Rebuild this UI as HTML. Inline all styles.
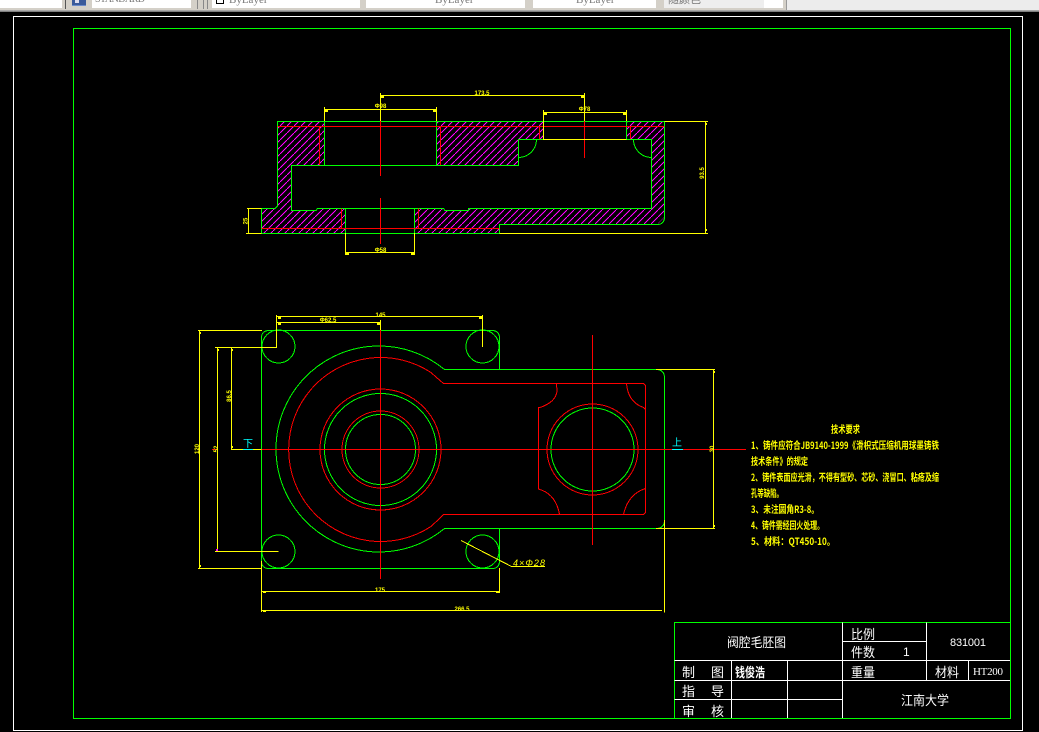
<!DOCTYPE html>
<html><head><meta charset="utf-8"><title>CAD drawing</title>
<style>
html,body{margin:0;padding:0;background:#000;overflow:hidden}
svg{display:block;position:absolute;left:0;top:0}
text{font-family:"Liberation Sans","WenQuanYi Zen Hei","Noto Sans CJK SC",sans-serif}
.g{stroke:#0f0;fill:none}.r{stroke:#f00;fill:none}.y{stroke:#ff0;fill:none}.w{stroke:#fff;fill:none}.c{stroke:#0ff;fill:none}
.d{fill:#ff0;font-size:6px;font-weight:bold;text-anchor:middle}
.t{fill:#ff0;font-size:10px;font-weight:bold;font-family:"WenQuanYi Zen Hei","Noto Sans CJK SC",sans-serif}
.b{fill:#fff;font-size:13px;font-family:"WenQuanYi Zen Hei","Noto Sans CJK SC",sans-serif}
.tb{fill:#777;font-size:11px;font-family:"Liberation Serif",serif}
</style></head><body>
<svg width="1039" height="732" viewBox="0 0 1039 732" xmlns="http://www.w3.org/2000/svg" shape-rendering="crispEdges">
<defs>
<pattern id="h" patternUnits="userSpaceOnUse" width="7" height="7">
<path d="M0 7L7 0" stroke="#f0f" stroke-width="1" fill="none"/>
</pattern>
</defs>
<rect width="1039" height="732" fill="#000"/>

<!-- toolbar -->
<rect x="0" y="0" width="1039" height="10" fill="#d4d0c8"/>
<rect x="786" y="0" width="253" height="10" fill="#ececec"/>
<rect x="0" y="10" width="1039" height="1" fill="#a8a8a8"/>
<rect x="0" y="11" width="1039" height="1" fill="#808080"/>
<rect x="0" y="0" width="62" height="8" fill="#fff"/>
<rect x="65" y="0" width="1" height="9" fill="#555"/>
<rect x="72" y="0" width="14" height="5" fill="#3a5a9a"/><rect x="75" y="0" width="4" height="3" fill="#dde"/><rect x="72" y="5" width="14" height="1" fill="#6a8aca"/>
<rect x="92" y="0" width="99" height="8" fill="#fff"/>
<rect x="197" y="0" width="1" height="9" fill="#888"/><rect x="203" y="0" width="1" height="9" fill="#888"/><rect x="207" y="0" width="1" height="9" fill="#888"/>
<rect x="212" y="0" width="148" height="8" fill="#fff"/>
<rect x="366" y="0" width="159" height="8" fill="#fff"/>
<rect x="533" y="0" width="123" height="8" fill="#fff"/>
<rect x="664" y="0" width="100" height="8" fill="#eee"/>
<rect x="764" y="0" width="19" height="8" fill="#fff"/>
<rect x="786" y="0" width="1" height="10" fill="#999"/>
<rect x="216.5" y="-1.5" width="7" height="5" fill="#fff" stroke="#000"/>
<text class="tb" x="229" y="3">ByLayer</text>
<text class="tb" x="435" y="3">ByLayer</text>
<text class="tb" x="576" y="3">ByLayer</text>
<text class="tb" x="95" y="2" style="font-size:10px" textLength="50">STANDARD</text>
<text x="668" y="3" style="fill:#777;font-size:11px;font-family:'WenQuanYi Zen Hei',sans-serif">随颜色</text>

<!-- frames -->
<path class="w" d="M13.5 16.5H1022.5V730.5H13.5Z"/>
<path class="g" d="M73.5 28.5H1010.5V718.5H73.5Z"/>

<!-- top section hatch -->
<path fill="url(#h)" fill-rule="evenodd" d="M277.5 121.5H664.5V217L657 224.5H499.5V233.5H261.5V208.5H275L277.5 206Z M291.5 165.5H518.5V139.5H651.5V208.5H468.5V210.5H443.5V208.5H316.5V210.5H291.5Z M324.5 121.5H436.5V165.5H324.5Z M543.5 121.5H626.5V139.5H543.5Z M345.5 208.5H414.5V233.5H345.5Z"/>
<!-- top section outline -->
<path class="g" d="M664.5 121.5V217Q664.5 224.5 657 224.5H499.5V233.5H261.5V208.5H275L277.5 206V121.5H664.5"/>
<path class="g" d="M291.5 165.5H518.5V139.5H651.5V208.5H468.5V210.5H445L443.5 208.5H317.5L316 210.5H291.5Z"/>
<path class="g" d="M324.5 121.5V165.5M436.5 121.5V165.5M626.5 121.5V139.5M345.5 208.5V233.5M414.5 208.5V233.5"/>
<path class="g" d="M518.5 157.5A18 18 0 0 0 536.5 139.5M633.5 139.5A18 18 0 0 0 651.5 157.5"/>
<!-- top red -->
<path class="r" d="M277.5 126.5H664.5M261.5 228.5H499.5M319.5 126.5V165M440.5 126.5V165M539.5 126.5V139M630.5 126.5V139M341.5 208.5V228.5M418.5 208.5V228.5"/>
<path class="r" d="M380.5 121V176M380.5 198V244M584.5 121V158"/>
<!-- top yellow dims -->
<path class="y" d="M380.5 93V121M584.5 93V121M380.5 95.5H584.5M324.5 107V121M436.5 107V121M324.5 109.5H436.5M543.5 110V139.5H626.5M626.5 110V121M543.5 112.5H626.5M664.5 121.5H708M499.5 233.5H708M705.5 121.5V233.5M247 208.5H261.5M246 233.5H261.5M248.5 208.5V233.5M345.5 233V255M414.5 233V255M345.5 252.5H414.5"/>
<path class="y" stroke-width="2" d="M381 97h3M581 97h3M325 111h3M433 111h3M544 114h3M623 114h3M706 123v2M706 229v2M346 254h3M411 254h3"/>
<text class="d" x="380.5" y="108">Φ98</text>
<text class="d" x="482" y="95">173.5</text>
<text class="d" x="584.5" y="111">Φ78</text>
<text class="d" x="380.5" y="252">Φ58</text>
<text class="d" transform="translate(704,173) rotate(-90)">93.5</text>
<text class="d" transform="translate(247.5,221) rotate(-90)">25</text>

<!-- plan view green -->
<path class="g" d="M444.5 369.5H656Q664.5 369.5 664.5 378V520Q664.5 528.5 656 528.5H444.5"/>
<path class="g" d="M444.5 369.5A103 103 0 1 0 444.5 528.5"/>
<path class="g" d="M261.5 338Q261.5 330.5 269 330.5H492Q499.5 330.5 499.5 338V369.5M261.5 338V561Q261.5 568.5 269 568.5H492Q499.5 568.5 499.5 561V528.5"/>
<circle class="g" cx="278.5" cy="346.5" r="16.5"/>
<circle class="g" cx="482.5" cy="346.5" r="16.5"/>
<circle class="g" cx="278.5" cy="551.5" r="16.5"/>
<circle class="g" cx="482.5" cy="551.5" r="16.5"/>
<circle class="g" cx="380.5" cy="449.5" r="56"/>
<circle class="g" cx="380.5" cy="449.5" r="35"/>
<circle class="g" cx="592.5" cy="449.5" r="41.5"/>
<!-- plan view red -->
<path class="r" d="M431 372.5A92 92 0 1 0 431 526.5Q437 521 443.5 514.5H643.5L645.5 512.5V385.5L643.5 383.5H443.5Q437 378 431 372.5Z"/>
<circle class="r" cx="380.5" cy="449.5" r="60.5"/>
<circle class="r" cx="380.5" cy="449.5" r="38.5"/>
<circle class="r" cx="592.5" cy="449.5" r="45.5"/>
<path class="r" d="M556.5 383.5L557 391Q556 402 540 407.5H538.5V489Q556 494 559.5 514.5"/>
<path class="r" d="M626.5 383.5Q628 402 643.5 407.5L645.5 409.5M645.5 488.5Q628 494 623.5 514.5"/>
<path class="r" d="M261.5 449.5H746M212 449.5H218M380.5 330V579M592.5 335V545"/>
<!-- plan yellow dims -->
<path class="y" d="M276.5 315V347.5H215M482.5 315V347M276.5 316.5H482.5M276.5 322.5H380.5M380.5 320V330M198 330.5H262M198 568.5H262M199.5 330.5V568.5M217.5 347.5V551.5M231.5 347.5V449.5M215 551.5H278.5M231 449.5H243M253 449.5H261.5"/>
<path class="y" d="M261.5 561V612M499.5 568V593M261.5 591.5H499.5M261.5 610.5H662M664.5 520V612.5M656 369.5H715M656 528.5H715M713.5 369.5V528.5M461 540.5L511.5 566.5H545"/>
<path class="y" stroke-width="2" d="M278 318h3M479 318h3M278 324h3M377 324h3M200 332v2M200 565v2M218 349v2M232 349v2M232 446v2M263 592h3M496 592h3M263 611h3M714 371v2M714 525v2"/>
<rect x="216" y="549" width="2" height="2" fill="#f0f"/>
<text class="d" x="380.5" y="317">145</text>
<text class="d" x="328" y="322">Φ62.5</text>
<text class="d" x="380" y="592">175</text>
<text class="d" x="462" y="611">266.5</text>
<text class="d" transform="translate(231,396) rotate(-90)">86.5</text>
<text class="d" transform="translate(199,449) rotate(-90)">120</text>
<text class="d" transform="translate(218,449) rotate(-90)">52</text>
<text class="d" transform="translate(714,449) rotate(-90)">30</text>
<text x="513" y="566" style="fill:#ff0;font-size:9px;font-style:italic" textLength="32">4×Φ28</text>

<!-- cyan section marks -->
<path class="c" d="M243 449.5H253M672 449.5H683"/>
<text x="243" y="447" style="fill:#0ff;font-size:10px;font-family:'WenQuanYi Zen Hei',sans-serif">下</text>
<text x="672" y="446" style="fill:#0ff;font-size:10px;font-family:'WenQuanYi Zen Hei',sans-serif">上</text>

<!-- tech requirements -->
<text class="t" x="831" y="433" textLength="29" lengthAdjust="spacingAndGlyphs">技术要求</text>
<text class="t" x="751" y="449" textLength="188" lengthAdjust="spacingAndGlyphs">1、铸件应符合JB9140-1999《滑枳式压缩机用球墨铸铁</text>
<text class="t" x="751" y="465" textLength="57" lengthAdjust="spacingAndGlyphs">技术条件》的规定</text>
<text class="t" x="751" y="481" textLength="188" lengthAdjust="spacingAndGlyphs">2、铸件表面应光滑，不得有型砂、芯砂、浇冒口、粘疮及缩</text>
<text class="t" x="751" y="497" textLength="32" lengthAdjust="spacingAndGlyphs">孔等缺陷。</text>
<text class="t" x="751" y="513" textLength="68" lengthAdjust="spacingAndGlyphs">3、未注圆角R3-8。</text>
<text class="t" x="751" y="529" textLength="73" lengthAdjust="spacingAndGlyphs">4、铸件需经回火处理。</text>
<text class="t" x="751" y="545" textLength="84" lengthAdjust="spacingAndGlyphs">5、材料：QT450-10。</text>

<!-- title block -->
<path class="g" d="M674.5 622.5H1010.5V718.5H674.5Z"/>
<path class="w" d="M842.5 622.5V718M926.5 622.5V680.5M674.5 660.5H1010M674.5 680.5H1010M674.5 699.5H842.5M731.5 660.5V718M787.5 660.5V718M842.5 641.5H926.5M968.5 660.5V680.5"/>
<text class="b" x="727" y="647" textLength="59" lengthAdjust="spacingAndGlyphs">阀腔毛胚图</text>
<text class="b" x="851" y="639" textLength="24" lengthAdjust="spacingAndGlyphs">比例</text>
<text class="b" x="851" y="657" textLength="24" lengthAdjust="spacingAndGlyphs">件数</text>
<text x="903" y="656" style="fill:#fff;font-size:12px">1</text>
<text x="950" y="646" style="fill:#fff;font-size:11px" textLength="36">831001</text>
<text class="b" x="851" y="677" textLength="24" lengthAdjust="spacingAndGlyphs">重量</text>
<text class="b" x="935" y="677" textLength="24" lengthAdjust="spacingAndGlyphs">材料</text>
<text x="973" y="675" style="fill:#fff;font-size:11px;font-family:'Liberation Serif',serif" textLength="30">HT200</text>
<text class="b" x="901" y="705" textLength="48" lengthAdjust="spacingAndGlyphs">江南大学</text>
<text class="b" x="682" y="677">制</text><text class="b" x="711" y="677">图</text>
<text class="b" x="682" y="696">指</text><text class="b" x="711" y="696">导</text>
<text class="b" x="682" y="716">审</text><text class="b" x="711" y="716">核</text>
<text class="b" x="735" y="677" style="font-weight:bold" textLength="30" lengthAdjust="spacingAndGlyphs">钱俊浩</text>
</svg>
</body></html>
